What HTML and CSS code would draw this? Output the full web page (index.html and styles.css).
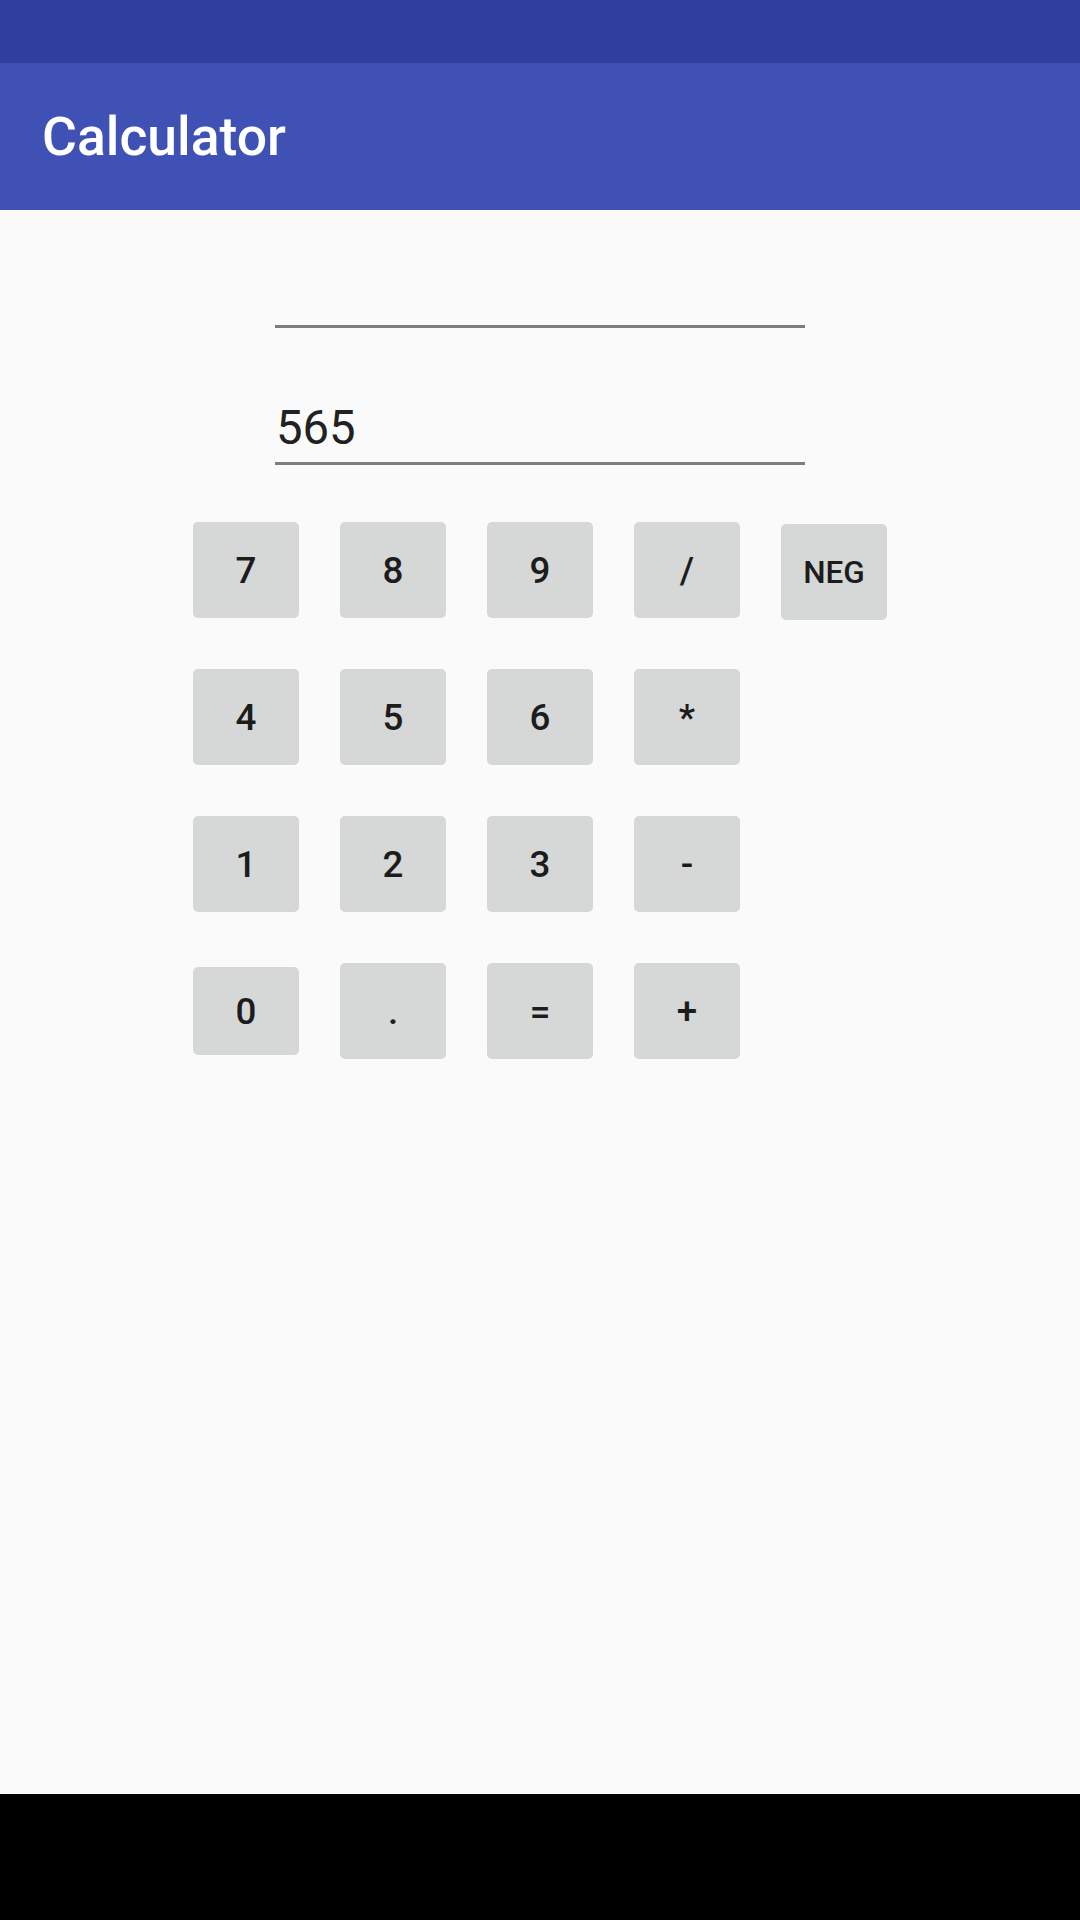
FILE: index.html
```html
<!DOCTYPE html>
<html>
<head>
<meta charset="utf-8">
<title>Calculator</title>
<link rel="stylesheet" href="styles.css">
</head>
<body>
<div class="screen">
  <div class="status-bar"></div>
  <header class="app-bar">
    <h1 class="app-title">Calculator</h1>
  </header>
  <main class="content">
    <div class="field field-result"></div>
    <div class="field field-input">565</div>
    <div class="keypad">
      <div class="key">7</div>
      <div class="key">8</div>
      <div class="key">9</div>
      <div class="key">/</div>
      <div class="key key-neg">NEG</div>

      <div class="key">4</div>
      <div class="key">5</div>
      <div class="key">6</div>
      <div class="key">*</div>
      <div class="key-empty"></div>

      <div class="key">1</div>
      <div class="key">2</div>
      <div class="key">3</div>
      <div class="key">-</div>
      <div class="key-empty"></div>

      <div class="key key-zero">0</div>
      <div class="key">.</div>
      <div class="key">=</div>
      <div class="key">+</div>
      <div class="key-empty"></div>
    </div>
  </main>
  <div class="nav-bar"></div>
</div>
</body>
</html>
```

FILE: styles.css
```css
* {
  box-sizing: border-box;
}

html, body {
  margin: 0;
  padding: 0;
  background: #fafafa;
}

.screen {
  width: 1080px;
  height: 1920px;
  display: flex;
  flex-direction: column;
  font-family: Roboto, "Noto Sans", "Liberation Sans", sans-serif;
  overflow: hidden;
}

.status-bar {
  height: 63px;
  flex: none;
  background: #303f9f;
}

.app-bar {
  height: 147px;
  flex: none;
  background: #3f51b5;
  display: flex;
  align-items: center;
  padding-left: 42px;
}

.app-title {
  margin: 0;
  font-size: 53.5px;
  font-weight: 500;
  color: #ffffff;
  line-height: 1;
}

.content {
  flex: 1;
  min-height: 0;
  background: #fafafa;
  display: flex;
  flex-direction: column;
  align-items: center;
}

.field {
  width: 530px;
  border-bottom: 3px solid #7d7d7d;
  font-size: 47.25px;
  color: #212121;
  padding-left: 1px;
}

.field-result {
  margin-top: 52px;
  height: 66px;
}

.field-input {
  margin-top: 64px;
  height: 73px;
  line-height: 72px;
}

.keypad {
  margin-top: 57px;
  display: grid;
  grid-template-columns: repeat(5, 106px);
  grid-auto-rows: 96px;
  column-gap: 41px;
  row-gap: 51px;
}

.key {
  background: #d6d7d7;
  border-radius: 5px;
  display: flex;
  align-items: center;
  justify-content: center;
  font-size: 36.75px;
  font-weight: 500;
  color: #1c1c1c;
  line-height: 1;
  padding-top: 2px;
}

.key-neg {
  margin-top: 2px;
  height: 96px;
  font-size: 31.5px;
}

.key-zero {
  margin-top: 4px;
  height: 88px;
}

.nav-bar {
  height: 126px;
  flex: none;
  background: #000000;
}
```
